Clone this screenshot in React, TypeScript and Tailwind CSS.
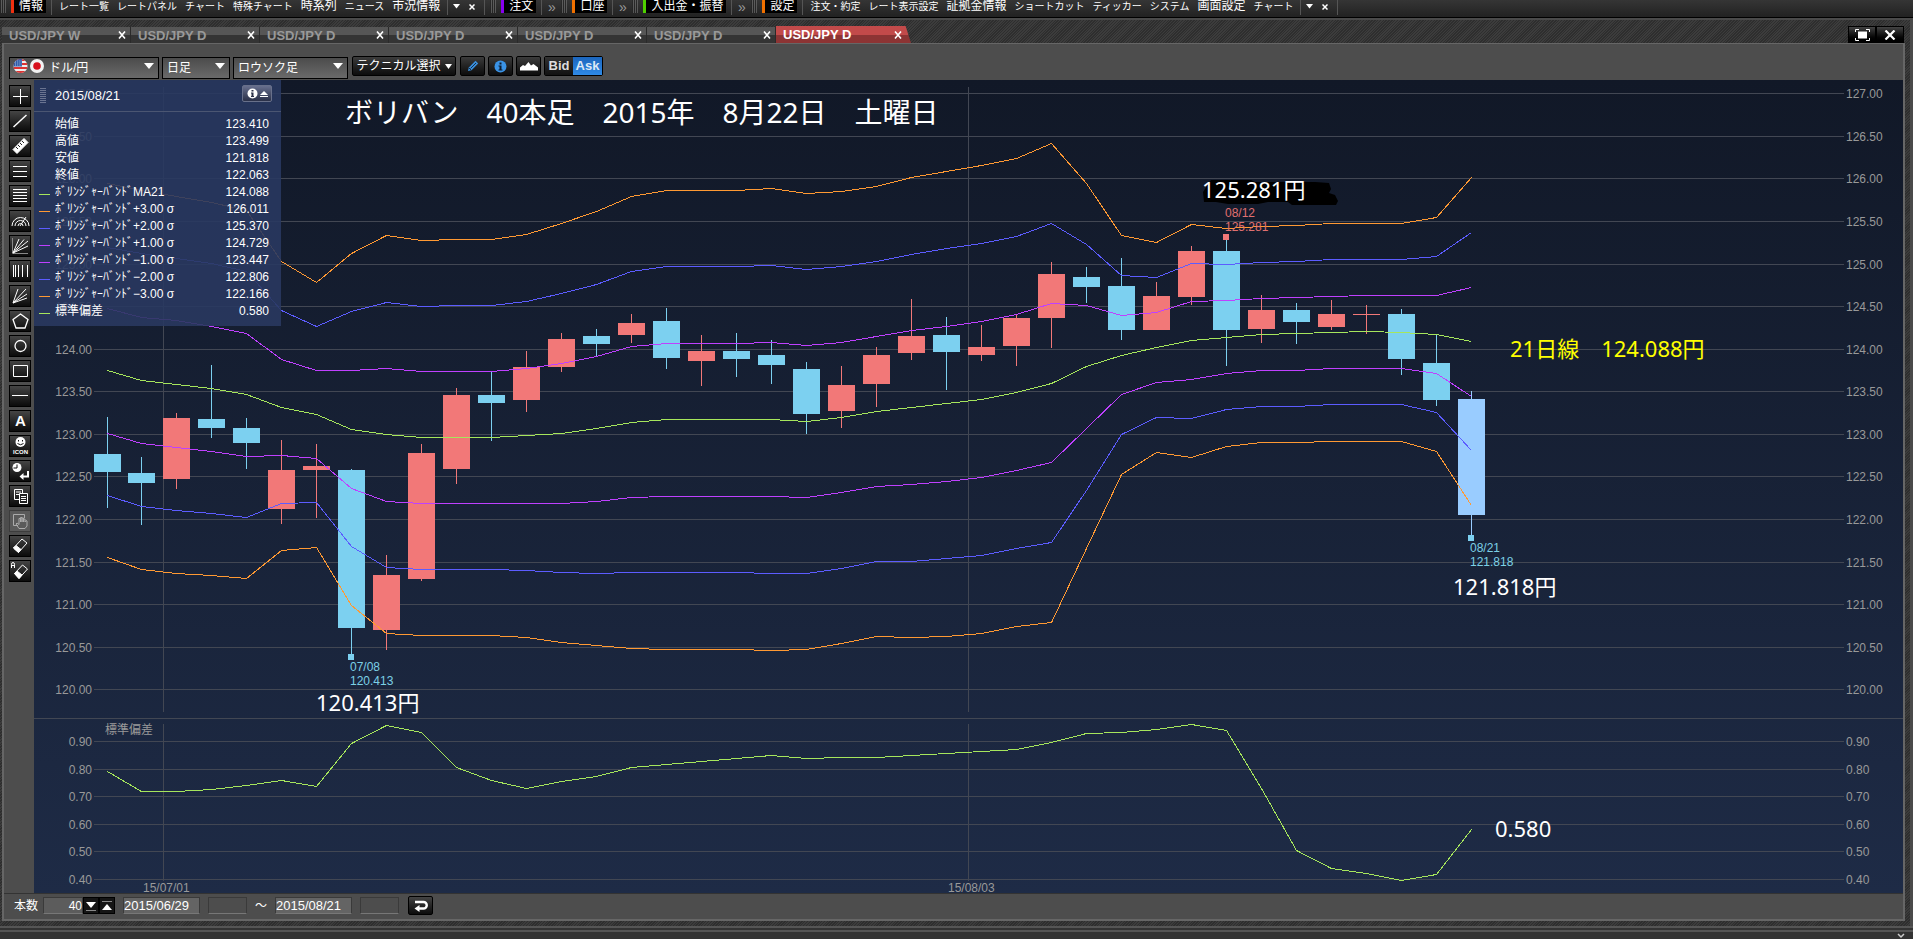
import type { ReactNode } from "react";

type Candle = {
  open: number; // body top
  close: number; // body bottom
  high: number;
  low: number;
  color: string;
};

const UP = "#f27878";
const DOWN = "#7cd0f0";
const LIVE = "#99ccff";

// pixel rows on the chart canvas: body top, body bottom, wick top, wick bottom
const candles: Candle[] = (
  [
    [454, 472, 417, 508, DOWN],
    [473, 483, 457, 525, DOWN],
    [418, 479, 413, 489, UP],
    [419, 428, 365, 438, DOWN],
    [428, 443, 418, 469, DOWN],
    [470, 509, 440, 524, UP],
    [466, 470, 444, 518, UP],
    [470, 628, 469, 654, DOWN],
    [575, 630, 555, 650, UP],
    [453, 579, 444, 581, UP],
    [395, 469, 388, 484, UP],
    [395, 403, 372, 441, DOWN],
    [367, 400, 351, 412, UP],
    [339, 367, 333, 372, UP],
    [336, 344, 329, 356, DOWN],
    [323, 335, 314, 343, UP],
    [321, 358, 308, 369, DOWN],
    [351, 361, 335, 386, UP],
    [351, 359, 333, 377, DOWN],
    [355, 365, 340, 384, DOWN],
    [369, 414, 362, 434, DOWN],
    [385, 411, 366, 428, UP],
    [355, 384, 347, 407, UP],
    [336, 353, 299, 360, UP],
    [335, 352, 317, 390, DOWN],
    [347, 355, 325, 361, UP],
    [318, 346, 315, 366, UP],
    [274, 318, 262, 348, UP],
    [277, 287, 267, 303, DOWN],
    [286, 330, 258, 340, DOWN],
    [296, 330, 282, 330, UP],
    [251, 297, 246, 305, UP],
    [251, 330, 240, 366, DOWN],
    [310, 329, 295, 343, UP],
    [310, 322, 303, 344, DOWN],
    [314, 327, 300, 330, UP],
    [314, 315, 305, 334, UP],
    [314, 359, 309, 375, DOWN],
    [363, 400, 334, 406, DOWN],
    [399, 515, 391, 535, LIVE],
  ] as [number, number, number, number, string][]
).map(([open, close, high, low, color]) => ({ open, close, high, low, color }));

const bands = [
  {
    color: "#ff9933",
    ys: [183, 190, 196, 202, 210, 261, 282, 253, 235, 240, 239, 239, 234, 223, 211, 196, 190, 190, 190, 188, 193, 191, 186, 177, 171, 165, 158, 143, 183, 235, 242, 224, 228, 226, 225, 223, 223, 223, 217, 177],
  },
  {
    color: "#5c5cff",
    ys: [247, 253, 258, 263, 271, 310, 326, 311, 302, 306, 305, 305, 301, 293, 284, 271, 266, 266, 266, 265, 269, 266, 261, 254, 248, 243, 236, 223, 244, 275, 277, 263, 264, 262, 261, 259, 259, 259, 256, 232],
  },
  {
    color: "#bf40ff",
    ys: [308, 317, 320, 326, 333, 359, 370, 370, 368, 371, 371, 371, 368, 363, 356, 346, 343, 343, 343, 342, 345, 342, 336, 330, 326, 321, 314, 303, 305, 315, 312, 301, 300, 298, 297, 296, 295, 295, 295, 287],
  },
  {
    color: "#a6e65c",
    ys: [370, 380, 384, 388, 394, 407, 414, 429, 434, 437, 437, 437, 435, 433, 428, 422, 419, 419, 419, 419, 421, 417, 411, 407, 403, 399, 392, 383, 366, 355, 347, 340, 337, 334, 333, 332, 331, 332, 334, 341],
  },
  {
    color: "#bf40ff",
    ys: [433, 443, 447, 451, 456, 455, 458, 488, 501, 503, 503, 503, 503, 503, 501, 497, 496, 496, 496, 496, 497, 492, 486, 484, 481, 477, 470, 462, 428, 394, 382, 379, 373, 370, 370, 368, 368, 368, 373, 396],
  },
  {
    color: "#5c5cff",
    ys: [495, 506, 510, 513, 517, 503, 502, 546, 567, 569, 569, 569, 570, 572, 573, 572, 572, 572, 572, 573, 573, 568, 561, 561, 558, 555, 548, 542, 490, 434, 417, 418, 409, 406, 406, 404, 404, 404, 412, 450],
  },
  {
    color: "#ff9933",
    ys: [557, 569, 573, 575, 578, 550, 547, 605, 633, 635, 635, 635, 637, 642, 645, 648, 649, 649, 649, 650, 649, 643, 636, 637, 636, 633, 626, 622, 548, 474, 452, 457, 446, 442, 442, 441, 441, 441, 451, 505],
  },
  {
    color: "#a6e65c",
    ys: [771, 791, 791, 789, 785, 780, 786, 743, 725, 732, 767, 780, 788, 781, 776, 767, 764, 761, 758, 755, 758, 757, 757, 755, 753, 751, 749, 742, 733, 732, 729, 724, 730, 788, 850, 868, 873, 880, 874, 829],
  },
];

const priceLines: [number, string][] = [
  [93, "127.00"],
  [136, "126.50"],
  [178, "126.00"],
  [221, "125.50"],
  [264, "125.00"],
  [306, "124.50"],
  [349, "124.00"],
  [391, "123.50"],
  [434, "123.00"],
  [476, "122.50"],
  [519, "122.00"],
  [562, "121.50"],
  [604, "121.00"],
  [647, "120.50"],
  [689, "120.00"],
];

const sdLines: [number, string][] = [
  [741, "0.90"],
  [769, "0.80"],
  [796, "0.70"],
  [824, "0.60"],
  [851, "0.50"],
  [879, "0.40"],
];

const months = [
  { x: 163, label: "15/07/01", labelX: 143 },
  { x: 968, label: "15/08/03", labelX: 948 },
];

const centerX = (i: number) => 107 + Math.floor(34.98 * i);

const legend: { name: string; value: string; color?: string }[] = [
  { name: "始値", value: "123.410" },
  { name: "高値", value: "123.499" },
  { name: "安値", value: "121.818" },
  { name: "終値", value: "122.063" },
  { name: "ﾎﾞﾘﾝｼﾞｬｰﾊﾞﾝﾄﾞMA21", value: "124.088", color: "bg-[#a6e65c]" },
  { name: "ﾎﾞﾘﾝｼﾞｬｰﾊﾞﾝﾄﾞ+3.00 σ", value: "126.011", color: "bg-[#ff9933]" },
  { name: "ﾎﾞﾘﾝｼﾞｬｰﾊﾞﾝﾄﾞ+2.00 σ", value: "125.370", color: "bg-[#5c5cff]" },
  { name: "ﾎﾞﾘﾝｼﾞｬｰﾊﾞﾝﾄﾞ+1.00 σ", value: "124.729", color: "bg-[#bf40ff]" },
  { name: "ﾎﾞﾘﾝｼﾞｬｰﾊﾞﾝﾄﾞ−1.00 σ", value: "123.447", color: "bg-[#bf40ff]" },
  { name: "ﾎﾞﾘﾝｼﾞｬｰﾊﾞﾝﾄﾞ−2.00 σ", value: "122.806", color: "bg-[#5c5cff]" },
  { name: "ﾎﾞﾘﾝｼﾞｬｰﾊﾞﾝﾄﾞ−3.00 σ", value: "122.166", color: "bg-[#ff9933]" },
  { name: "標準偏差", value: "0.580", color: "bg-[#a6e65c]" },
];

/* ---------- top menu ---------- */

function Grip() {
  return (
    <span className="h-[13px] w-[6px] bg-[repeating-linear-gradient(90deg,#222_0_1px,#777_1px_2px)] opacity-60" />
  );
}

function Divider() {
  return <span className="h-[16px] w-px bg-[#555]" />;
}

function Badge({ color, children }: { color: string; children: ReactNode }) {
  return (
    <button
      className={`h-[13px] border-l-[3px] bg-black pr-[3px] pl-[5px] text-xs leading-[13px] whitespace-nowrap ${color}`}
    >
      {children}
    </button>
  );
}

function More() {
  return (
    <button className="h-[13px] w-[9px] text-sm leading-[8px] text-[#999]" aria-label="more">
      »
    </button>
  );
}

function MenuItems({ items }: { items: string[] }) {
  return (
    <nav className="flex items-center gap-2 px-[2px]">
      {items.map((item) => (
        <button
          key={item}
          className={`leading-[13px] whitespace-nowrap ${
            /[ァ-ヶ・]/.test(item) ? "text-[10px]" : "text-xs"
          }`}
        >
          {item}
        </button>
      ))}
    </nav>
  );
}

function MenuEnd() {
  return (
    <>
      <Divider />
      <button aria-label="menu">
        <svg width="7" height="5" viewBox="0 0 7 5">
          <path d="M0 0h7L3.500 4.500z" fill="#fff" />
        </svg>
      </button>
      <button className="mx-1" aria-label="close">
        <svg width="6" height="6" viewBox="0 0 6 6">
          <path d="M.5 .5l5 5M5.500 .5l-5 5" stroke="#fff" strokeWidth="1.500" />
        </svg>
      </button>
      <Divider />
    </>
  );
}

function MenuBar() {
  return (
    <header className="flex h-[18px] items-start gap-[5px] overflow-hidden border-b border-black bg-gradient-to-b from-[#353535] to-[#222]">
      <div className="flex h-[13px] items-center gap-[5px]">
        <Grip />
        <Badge color="border-[#f03010]">情報</Badge>
        <Divider />
        <MenuItems
          items={["レート一覧", "レートパネル", "チャート", "特殊チャート", "時系列", "ニュース", "市況情報"]}
        />
        <MenuEnd />
      </div>
      <div className="flex h-[13px] items-center gap-[5px]">
        <Grip />
        <Badge color="border-[#8800ee]">注文</Badge>
        <Divider />
        <More />
      </div>
      <div className="flex h-[13px] items-center gap-[5px]">
        <Grip />
        <Badge color="border-[#f07000]">口座</Badge>
        <Divider />
        <More />
      </div>
      <div className="flex h-[13px] items-center gap-[5px]">
        <Grip />
        <Badge color="border-[#50d000]">入出金・振替</Badge>
        <Divider />
        <More />
      </div>
      <div className="flex h-[13px] items-center gap-[5px]">
        <Grip />
        <Badge color="border-[#f07000]">設定</Badge>
        <Divider />
        <MenuItems
          items={[
            "注文・約定",
            "レート表示設定",
            "証拠金情報",
            "ショートカット",
            "ティッカー",
            "システム",
            "画面設定",
            "チャート",
          ]}
        />
        <MenuEnd />
      </div>
    </header>
  );
}

/* ---------- chart tabs ---------- */

function Tab({ label, active }: { label: string; active?: boolean }) {
  return (
    <div
      className={`flex items-center justify-between pl-[7px] text-[13px] font-bold ${
        active
          ? "h-[17px] w-[135px] bg-gradient-to-b from-[#c24a4a] from-50% to-[#8c3434] to-50% pr-[9px] text-white [clip-path:polygon(0_0,96%_0,100%_100%,0_100%)]"
          : "h-4 w-[129px] border-r border-[#2a2a2a] bg-gradient-to-b from-[#565656] from-50% to-[#343434] to-50% pr-1 text-[#999]"
      }`}
    >
      <button className="pt-px leading-4">{label}</button>
      <button aria-label="close tab">
        <svg width="8" height="8" viewBox="0 0 8 8">
          <path d="M1 .5l6 7M7 .5l-6 7" stroke="#fff" strokeWidth="1.600" />
        </svg>
      </button>
    </div>
  );
}

function TabBar() {
  return (
    <div className="flex h-[23px] items-end pl-[2px]">
      {["USD/JPY W", "USD/JPY D", "USD/JPY D", "USD/JPY D", "USD/JPY D", "USD/JPY D"].map((t, i) => (
        <Tab key={i} label={t} />
      ))}
      <Tab label="USD/JPY D" active />
      <div className="mr-[6px] ml-auto flex">
        <button
          className="flex h-[17px] w-7 items-center justify-center border border-black bg-gradient-to-b from-[#444] to-black"
          aria-label="maximize"
        >
          <svg width="15" height="12" viewBox="0 0 15 12">
            <rect x="3" y="2.500" width="9" height="7" fill="#fff" />
            <path
              d="M.5 3V.5H4M11 .5h3.500V3M14.500 9v2.500H11M4 11.500H.5V9"
              fill="none"
              stroke="#fff"
            />
          </svg>
        </button>
        <button
          className="flex h-[17px] w-7 items-center justify-center border border-black bg-gradient-to-b from-[#444] to-black"
          aria-label="close"
        >
          <svg width="12" height="10" viewBox="0 0 12 10">
            <path d="M1.500 .5l9 9M10.500 .5l-9 9" stroke="#fff" strokeWidth="2.200" />
          </svg>
        </button>
      </div>
    </div>
  );
}

/* ---------- chart toolbar ---------- */

function Select({
  label,
  value,
  width,
  children,
}: {
  label: string;
  value: string;
  width: string;
  children?: ReactNode;
}) {
  return (
    <div className={`relative h-[22px] ${width}`}>
      <select
        aria-label={label}
        className={`h-full w-full appearance-none border border-black bg-gradient-to-b from-[#4c4c4c] to-[#6a6a6a] text-xs text-white outline-none ${
          children ? "pl-[39px]" : "pl-1"
        }`}
      >
        <option>{value}</option>
      </select>
      {children}
      <svg
        className="pointer-events-none absolute top-2 right-[5px]"
        width="10"
        height="6"
        viewBox="0 0 10 6"
      >
        <path d="M0 0h10L5 6z" fill="#fff" />
      </svg>
    </div>
  );
}

const toolButton =
  "flex h-[20px] items-center justify-center rounded-xs border border-black bg-gradient-to-b from-[#3c3c3c] to-[#0c0c0c]";

function ChartToolbar() {
  return (
    <div className="flex h-9 items-center pt-[11px] pb-[3px] pl-[5px]">
      <div className="flex gap-[3px]">
        <Select label="通貨ペア" value="ドル/円" width="w-[150px]">
          <svg
            className="pointer-events-none absolute top-[3px] left-1"
            width="32"
            height="16"
            viewBox="0 0 32 16"
          >
            <clipPath id="us">
              <circle cx="7.500" cy="8" r="7" />
            </clipPath>
            <g clipPath="url(#us)">
              <rect width="16" height="16" fill="#eee" />
              <path d="M0 2h16M0 6h16M0 10h16M0 14h16" stroke="#d33" strokeWidth="1.800" />
              <rect width="9" height="8.500" fill="#2f5aa8" />
              <path
                d="M2 3h7M2 5h7M2 7h7"
                stroke="#cde"
                strokeWidth=".8"
                strokeDasharray="1 1.200"
              />
            </g>
            <circle cx="24" cy="8" r="7" fill="#f2f2f2" />
            <circle cx="24" cy="8" r="3.800" fill="#d8101c" />
          </svg>
        </Select>
        <Select label="足種" value="日足" width="w-[68px]" />
        <Select label="チャート種類" value="ロウソク足" width="w-[115px]" />
      </div>
      <button className={`${toolButton} ml-1 w-[104px] gap-1 text-xs whitespace-nowrap`}>
        テクニカル選択
        <svg width="7" height="5" viewBox="0 0 7 5">
          <path d="M0 0h7L3.500 5z" fill="#fff" />
        </svg>
      </button>
      <div className="ml-1 flex gap-[3px]">
        <button className={`${toolButton} w-[25px]`} aria-label="draw">
          <svg width="14" height="14" viewBox="0 0 14 14">
            <path d="M2 12l.8-3.500L9.500 1.800l2.700 2.700-6.700 6.700z" fill="#3a8fdc" />
            <path d="M4.500 9.500l5.500-5.500M3 9l2 2" stroke="#14304e" />
          </svg>
        </button>
        <button className={`${toolButton} w-[25px]`} aria-label="info">
          <svg width="13" height="13" viewBox="0 0 13 13">
            <circle cx="6.500" cy="6.500" r="6" fill="#3a93e6" />
            <rect x="5.500" y="2.500" width="2" height="2" fill="#0d1d30" />
            <path d="M4.500 5.500h3V9.500h1v1h-4v-1h1v-3h-1z" fill="#0d1d30" />
          </svg>
        </button>
        <button className={`${toolButton} w-[25px]`} aria-label="area">
          <svg width="18" height="10" viewBox="0 0 18 10">
            <path d="M0 9.500V6.500L3 4l2 1 3.500-4 2.500 3.500L13.500 3 18 6.500v3z" fill="#fff" />
          </svg>
        </button>
        <div className="flex h-[20px] rounded-xs border border-black text-[13px] font-bold">
          <button className="w-7 bg-gradient-to-b from-[#333] to-[#111] leading-[18px] text-[#ddd]">
            Bid
          </button>
          <button className="w-[29px] bg-gradient-to-b from-[#1c66bd] to-[#2f8ae6] leading-[18px] text-[#dde8f5]">
            Ask
          </button>
        </div>
      </div>
    </div>
  );
}

/* ---------- drawing tools ---------- */

const tools: { name: string; icon: ReactNode; disabled?: boolean }[] = [
  { name: "cross", icon: <path d="M10.500 3v15M3 10.500h15" /> },
  { name: "trend line", icon: <path d="M3.500 16L16.500 4" strokeWidth="1.500" /> },
  {
    name: "ruler",
    icon: (
      <>
        <path d="M3 13.500L14 2.500l4 4-11 11z" fill="#fff" />
        <path d="M6 11l2 2M8 9l2 2M10 7l2 2M12 5l2 2" stroke="#222" />
      </>
    ),
  },
  { name: "three lines", icon: <path d="M3 5.500h14M3 10.500h14M3 15.500h14" /> },
  { name: "five lines", icon: <path d="M3 3.500h14M3 6.500h14M3 9.500h14M3 12.500h14M3 15.500h14" /> },
  {
    name: "arcs",
    icon: (
      <path d="M2 15a8.500 8.500 0 0 1 17 0M5 15a5.500 5.500 0 0 1 11 0M8 15a2.500 2.500 0 0 1 5 0M10 15l6-9" />
    ),
  },
  {
    name: "fan",
    icon: (
      <>
        <path d="M2.500 2v15.500H18" stroke="#888" />
        <path d="M3 17L9 3M3 17L14 3.500M3 17L18 5M3 17l15-7" />
      </>
    ),
  },
  { name: "time lines", icon: <path d="M3.500 4v12M5.500 4v12M8.500 4v12M12.500 4v12M17.500 4v12" /> },
  { name: "rays", icon: <path d="M3 17L8 3M3 17L16 3M3 17L17 8M3 17l14-5" /> },
  { name: "pentagon", icon: <path d="M10.500 3L18 8.500 15 17H6L3 8.500z" strokeWidth="1.300" /> },
  { name: "ellipse", icon: <circle cx="10.500" cy="10" r="5.500" strokeWidth="1.300" /> },
  { name: "rectangle", icon: <path d="M3.500 4.500h14v11h-14z" /> },
  { name: "horizontal line", icon: <path d="M2 9.500h16" /> },
  {
    name: "text",
    icon: (
      <text x="10.500" y="15" textAnchor="middle" fontSize="15" fontWeight="bold" fill="#fff" stroke="none">
        A
      </text>
    ),
  },
  {
    name: "icon stamp",
    icon: (
      <>
        <circle cx="10.500" cy="6" r="5" fill="#fff" stroke="none" />
        <path d="M8.500 4v1.500M12.500 4v1.500M7.500 7.500q3 2.500 6 0" stroke="#111" />
        <text x="10.500" y="18" textAnchor="middle" fontSize="6" fontWeight="bold" fill="#fff" stroke="none">
          ICON
        </text>
      </>
    ),
  },
  {
    name: "history",
    icon: (
      <>
        <circle cx="7" cy="6.500" r="4.500" fill="#fff" stroke="none" />
        <path d="M7 3.500v3.500H3.500" stroke="#111" />
        <path d="M18 10v5.500h-6" strokeWidth="2" />
        <path d="M13.500 12v7L9.500 15.500z" fill="#fff" stroke="none" />
      </>
    ),
  },
  {
    name: "copy",
    icon: (
      <>
        <path d="M4.500 3.500h8v10h-8zM6 6h5M6 8.500h5" />
        <path d="M9.500 7.500h8v10h-8z" fill="#222" />
        <path d="M11 10.500h5M11 12.500h5M11 14.500h5" />
      </>
    ),
  },
  {
    name: "move",
    disabled: true,
    icon: (
      <>
        <path d="M8 14.500H3.500v-11h11V7" />
        <path d="M9 17.500l-3-4.500 1-1 2 1.500V7.500h1.500V11 6.500H12V11 7h1.500v4V8H15v3l1-1.500 1 .5v5l-2 2.500z" />
      </>
    ),
  },
  {
    name: "eraser",
    icon: (
      <>
        <path d="M3.500 12L12 3l5 4-8.500 9.500z" />
        <path d="M3.500 12L6 9.500l5 4-2.500 3z" fill="#fff" />
      </>
    ),
  },
  {
    name: "erase all",
    icon: (
      <>
        <path d="M4.500 12.500l8-8.500 5 4-8.500 9.500z" />
        <path d="M4.500 12.500L7 10l5 4-3 3.500z" fill="#fff" />
        <path d="M1.500 7V3.500q0-2 1.500-2t1.500 2V7M1.500 4.500h3" />
      </>
    ),
  },
];

function DrawingTools() {
  return (
    <aside className="flex w-[30px] shrink-0 flex-col gap-[3px] pt-[5px] pl-[5px]">
      {tools.map((tool) => (
        <button
          key={tool.name}
          aria-label={tool.name}
          disabled={tool.disabled}
          className={`h-[22px] w-[22px] border ${
            tool.disabled
              ? "border-[#3c3c3c] bg-[#5a5a5a]"
              : "border-black bg-gradient-to-b from-[#454545] to-[#0c0c0c]"
          }`}
        >
          <svg
            width="20"
            height="20"
            viewBox="0 0 20 20"
            fill="none"
            stroke={tool.disabled ? "#aaa" : "#fff"}
          >
            {tool.icon}
          </svg>
        </button>
      ))}
    </aside>
  );
}

/* ---------- chart ---------- */

function Chart() {
  return (
    <svg
      className="block h-auto w-full font-['Liberation_Sans','Noto_Sans_CJK_JP',sans-serif]"
      viewBox="34 80 1869 813"
      fontSize="12"
    >
      <defs>
        <linearGradient id="bg" x1="0" y1="0" x2="0" y2="1">
          <stop offset="0" stopColor="#111827" />
          <stop offset="1" stopColor="#1e2b46" />
        </linearGradient>
      </defs>
      <rect x="34" y="80" width="1869" height="813" fill="url(#bg)" />

      <g fill="#424753" shapeRendering="crispEdges">
        {[...priceLines, ...sdLines].map(([y]) => (
          <rect key={y} x="94" y={y} width="1750" height="1" />
        ))}
        <rect x="34" y="718" width="1869" height="1" />
        {months.map((m) => (
          <g key={m.x}>
            <rect x={m.x} y="87" width="1" height="625" />
            <rect x={m.x} y="724" width="1" height="157" />
          </g>
        ))}
      </g>

      <g fill="#999">
        {[...priceLines, ...sdLines].map(([y, label]) => (
          <g key={y}>
            <text x="92" y={y + 5} textAnchor="end">
              {label}
            </text>
            <text x="1846" y={y + 5}>
              {label}
            </text>
          </g>
        ))}
        {months.map((m) => (
          <text key={m.x} x={m.labelX} y="892">
            {m.label}
          </text>
        ))}
        <text x="105" y="734">
          標準偏差
        </text>
      </g>

      <g shapeRendering="crispEdges">
        {candles.map((c, i) => (
          <g key={i} fill={c.color}>
            <rect x={centerX(i)} y={c.high} width="1" height={c.low - c.high} />
            <rect x={centerX(i) - 13} y={c.open} width="27" height={c.close - c.open} />
          </g>
        ))}
        <g fill="none" transform="translate(0.500 0.500)">
          {bands.map((b, i) => (
            <polyline
              key={i}
              stroke={b.color}
              points={b.ys.map((y, j) => `${centerX(j)},${y}`).join(" ")}
            />
          ))}
        </g>
        <rect x="348" y="654" width="6" height="6" fill={DOWN} />
        <rect x="1223" y="234" width="6" height="6" fill={UP} />
        <rect x="1468" y="535" width="6" height="6" fill={DOWN} />
      </g>

      <g fill="#7cd0e6">
        <text x="350" y="671">07/08</text>
        <text x="350" y="685">120.413</text>
        <text x="1470" y="552">08/21</text>
        <text x="1470" y="566">121.818</text>
      </g>
      <g fill="#e07070">
        <text x="1225" y="217">08/12</text>
        <text x="1225" y="231">125.281</text>
      </g>

      {/* hand-placed notes */}
      <path
        d="M1203 192l8-12h40l4 2h60l14 1 2 6-2 4 6 2 3 6-2 4h-44l-4-3h-20l-10 2h-30l-12-2h-12z"
        fill="#000"
      />
      <g fill="#fff" fontSize="22" className="font-['Noto_Sans','Noto_Sans_CJK_JP',sans-serif]">
        <text x="345" y="123" fontSize="28" className="whitespace-pre">
          ボリバン　40本足　2015年　8月22日　土曜日
        </text>
        <text x="1202" y="198">125.281円</text>
        <text x="1510" y="357" fill="#ffff00" className="whitespace-pre">
          21日線　124.088円
        </text>
        <text x="1453" y="595">121.818円</text>
        <text x="316" y="711">120.413円</text>
        <text x="1495" y="837">0.580</text>
      </g>
    </svg>
  );
}

function DataPanel() {
  return (
    <section className="absolute top-0 left-0 w-[247px] bg-[#293860]/90 pb-[6px] text-xs">
      <div className="flex h-8 items-center border-b border-[#4b5672] pr-[9px] pl-[6px]">
        <span className="h-4 w-[6px] bg-[repeating-linear-gradient(0deg,#293860_0_1px,#8890a8_1px_2px)] opacity-70" />
        <h2 className="ml-[9px] pt-px text-[13px]">2015/08/21</h2>
        <button
          className="mb-[4px] ml-auto flex h-[17px] w-[30px] items-center justify-center gap-[2px] rounded-xs border border-[#68708a] bg-gradient-to-b from-[#68708e] to-[#2a3048]"
          aria-label="collapse"
        >
          <svg width="11" height="11" viewBox="0 0 11 11">
            <circle cx="5.500" cy="5.500" r="5" fill="#fff" />
            <path d="M4 4.500h2.500V8H7v1H4V8h.5V5.500H4zM4.500 2h2v1.500h-2z" fill="#2a3048" />
          </svg>
          <svg width="8" height="8" viewBox="0 0 8 8">
            <path d="M0 5l4-4 4 4zM0 6h8v1H0z" fill="#fff" />
          </svg>
        </button>
      </div>
      <dl className="pt-1 pr-3">
        {legend.map((row) => (
          <div key={row.name} className="flex h-[17px] items-center pl-[5px]">
            <span className={`mt-1 h-px w-[11px] ${row.color ?? ""}`} />
            <dt className="ml-[5px] leading-[17px] whitespace-nowrap">{row.name}</dt>
            <dd className="ml-auto leading-[17px]">{row.value}</dd>
          </div>
        ))}
      </dl>
    </section>
  );
}

/* ---------- bottom bar ---------- */

const field = "h-[17px] border border-[#3a3a3a] border-b-[#777] text-xs text-white outline-none";

function RangeBar() {
  return (
    <div className="flex h-[26px] items-center border-t border-[#333] pb-[2px] pl-[10px] text-xs">
      <label htmlFor="bars">本数</label>
      <input
        id="bars"
        defaultValue="40"
        className={`${field} ml-[5px] w-10 bg-[#5c5c5c] text-right`}
      />
      <button
        className="flex h-[17px] w-4 items-center justify-center border border-black bg-[#151515]"
        aria-label="decrease"
      >
        <svg width="10" height="10" viewBox="0 0 10 10">
          <path d="M0 1h10L5 7z" fill="#fff" />
          <path d="M0 9.500h10" stroke="#888" />
        </svg>
      </button>
      <button
        className="flex h-[17px] w-4 items-center justify-center border border-black bg-[#151515]"
        aria-label="increase"
      >
        <svg width="10" height="10" viewBox="0 0 10 10">
          <path d="M0 9h10L5 3z" fill="#fff" />
          <path d="M0 .5h10" stroke="#888" />
        </svg>
      </button>
      <input
        aria-label="開始日"
        defaultValue="2015/06/29"
        className={`${field} ml-2 w-[77px] bg-[#646464] text-[13px]`}
      />
      <input aria-label="開始時刻" disabled className={`${field} ml-2 w-[39px] bg-[#4d4d4d]`} />
      <span className="mx-2 w-3">〜</span>
      <input
        aria-label="終了日"
        defaultValue="2015/08/21"
        className={`${field} w-[77px] bg-[#646464] text-[13px]`}
      />
      <input aria-label="終了時刻" disabled className={`${field} ml-2 w-[39px] bg-[#4d4d4d]`} />
      <button
        className="ml-[9px] flex h-[19px] w-[25px] items-center justify-center rounded-xs border border-black bg-gradient-to-b from-[#444] to-[#0c0c0c]"
        aria-label="reset"
      >
        <svg width="14" height="12" viewBox="0 0 14 12">
          <path d="M1 2h8.500a2.500 2.500 0 0 1 0 6.500H5" fill="none" stroke="#fff" strokeWidth="2.400" />
          <path d="M5.500 5v7L.5 8.500z" fill="#fff" />
        </svg>
      </button>
    </div>
  );
}

export default function App() {
  return (
    <div className="flex min-h-screen flex-col bg-[#333] font-['Liberation_Sans','Noto_Sans_CJK_JP',sans-serif] text-white">
      <MenuBar />
      <main className="border-t-2 border-r-[3px] border-[#4a4a4a] bg-[repeating-linear-gradient(135deg,#2e2e2e_0_1px,#3c3c3c_1px_2px)] pb-[5px]">
        <TabBar />
        <div className="mr-[5px] ml-[2px] border-2 border-t border-[#666] bg-[#4d4d4d]">
          <ChartToolbar />
          <div className="flex">
            <DrawingTools />
            <div className="relative min-w-0 grow">
              <Chart />
              <DataPanel />
            </div>
          </div>
          <RangeBar />
        </div>
      </main>
      <footer className="flex grow items-end justify-end border-t-[6px] border-double border-[#555] pr-2">
        <button aria-label="scroll down">
          <svg width="8" height="6" viewBox="0 0 8 6">
            <path d="M1 1l3 3 3-3" fill="none" stroke="#ccc" strokeWidth="1.500" />
          </svg>
        </button>
      </footer>
    </div>
  );
}
